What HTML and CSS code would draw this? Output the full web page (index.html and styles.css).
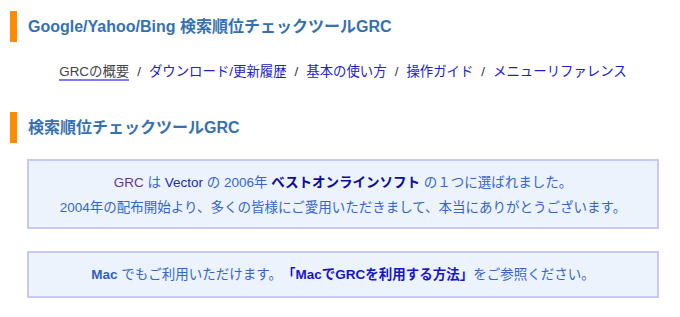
FILE: index.html
```html
<!DOCTYPE html>
<html lang="ja">
<head>
<meta charset="utf-8">
<title>GRC</title>
<link rel="stylesheet" href="styles.css">
</head>
<body>
<div class="page">
  <h2 class="heading">Google/Yahoo/Bing 検索順位チェックツールGRC</h2>
  <nav class="subnav">
    <span class="current">GRCの概要</span><span class="sep">/</span><a href="#">ダウンロード/更新履歴</a><span class="sep">/</span><a href="#">基本の使い方</a><span class="sep">/</span><a href="#">操作ガイド</a><span class="sep">/</span><a href="#">メニューリファレンス</a>
  </nav>
  <h2 class="heading heading-second">検索順位チェックツールGRC</h2>
  <div class="section">
    <div class="box box-award">
      <p><a class="visited" href="#">GRC</a> は <a class="link" href="#">Vector</a> の 2006年 <strong class="dark">ベストオンラインソフト</strong> の１つに選ばれました。</p>
      <p>2004年の配布開始より、多くの皆様にご愛用いただきまして、本当にありがとうございます。</p>
    </div>
    <div class="box box-mac">
      <p><strong class="mac">Mac</strong> でもご利用いただけます。<a class="boldlink" href="#">「MacでGRCを利用する方法」</a>をご参照ください。</p>
    </div>
  </div>
</div>
</body>
</html>
```
FILE: styles.css
```css
html, body {
  margin: 0;
  padding: 0;
  background: #ffffff;
}
body {
  font-family: "Liberation Sans", "Noto Sans CJK JP", sans-serif;
  text-spacing-trim: space-all;
}
.page {
  padding: 11px 21px 0 10px;
}
.heading {
  margin: 0;
  height: 31px;
  line-height: 31px;
  border-left: 7px solid #ff8c00;
  padding-left: 11px;
  font-size: 16px;
  font-weight: bold;
  color: #3571b1;
}
.subnav {
  margin: 17px 0 0 17px;
  height: 26px;
  line-height: 26px;
  text-align: center;
  font-size: 13.4px;
  color: #333333;
}
.subnav a {
  color: #2121cc;
  text-decoration: none;
}
.subnav .current {
  color: #444444;
  border-bottom: 2px solid #7c7cf2;
}
.subnav .sep {
  margin: 0 8px;
  color: #333333;
}
.heading-second {
  margin-top: 27px;
}
.section {
  margin-left: 17px;
  display: flex;
  flex-direction: column;
}
.box {
  background: #edf3fd;
  border: 2px solid #c8c8f5;
  text-align: center;
  font-size: 13.5px;
  line-height: 25px;
  color: #3366cc;
}
.box p {
  margin: 0;
}
.box-award {
  margin-top: 16px;
  padding: 9px 0 7px;
}
.box-mac {
  margin-top: 22px;
  padding: 9px 0;
}
.box a {
  text-decoration: none;
}
.visited {
  color: #663399;
}
.link {
  color: #1a2aaa;
}
.dark {
  color: #0c0c96;
  font-weight: bold;
}
.mac {
  font-weight: bold;
  color: #2f5fc6;
}
.boldlink {
  font-weight: bold;
  color: #1616c8;
}
```
